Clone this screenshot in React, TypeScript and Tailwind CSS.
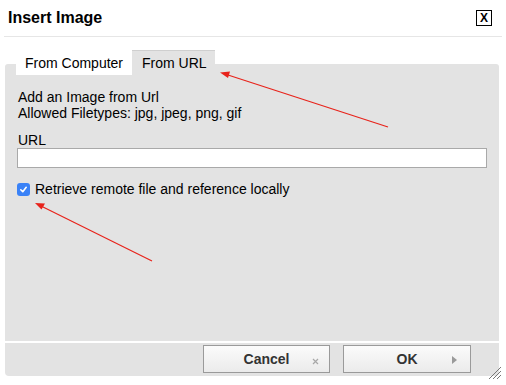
import React from "react";

export default function App() {
  return (
    <div
      className="relative w-[506px] h-[385px] bg-white overflow-hidden text-black"
      style={{ fontFamily: '"Liberation Sans", Arial, sans-serif' }}
    >
      {/* Header */}
      <div className="mx-[4px] h-[37px] flex items-center justify-between border-b border-[#e6e6e6] pl-[4px] pr-[10px]">
        <div className="text-[16px] font-bold leading-none">Insert Image</div>
        <div className="w-[16px] h-[16px] border border-black flex items-center justify-center text-[12px] font-bold leading-none">
          X
        </div>
      </div>

      {/* Tabs */}
      <div className="relative z-10 mt-[13px] ml-[16px] flex h-[24px] text-[14px] leading-none whitespace-nowrap">
        <div className="h-[25px] bg-white px-[9px] flex items-center pt-[1px]">From Computer</div>
        <div className="h-[24px] bg-[#e3e3e3] border-t border-[#cfcfcf] pl-[10px] pr-[8px] flex items-center">From URL</div>
      </div>

      {/* Panel */}
      <div className="-mt-[10px] ml-[5px] mr-[7px] h-[277px] bg-[#e3e3e3] rounded-t-[3px] pt-[25px] pl-[12px] pr-[12px] text-[14px]">
        <div className="pl-[1px] leading-[16px]">
          <div>Add an Image from Url</div>
          <div>Allowed Filetypes: jpg, jpeg, png, gif</div>
        </div>
        <div className="mt-[11px] pl-[1px] leading-[16px]">URL</div>
        <div className="h-[20px] w-[470px] border border-[#a9a9a9] bg-white" />
        <div className="mt-[13px] flex items-center leading-[16px]">
          <span className="w-[13px] h-[13px] rounded-[3px] bg-[#3a82f7] flex items-center justify-center">
            <svg width="9" height="9" viewBox="0 0 10 10">
              <path d="M2 5.3 L4.2 7.5 L8 2.6" stroke="white" strokeWidth="1.8" fill="none" strokeLinecap="round" strokeLinejoin="round" />
            </svg>
          </span>
          <span className="ml-[5px]">Retrieve remote file and reference locally</span>
        </div>
      </div>

      {/* Separator + footer */}
      <div className="ml-[5px] mr-[7px] h-[1px] bg-white mt-[1px]" />
      <div className="ml-[5px] mr-[7px] h-[33px] bg-[#e3e3e3] rounded-b-[4px] flex justify-end items-start pt-[2px] pr-[28px] gap-[13px]">
        <div className="relative w-[127px] h-[28px] border border-[#9a9a9a] bg-gradient-to-b from-[#fbfbfb] to-[#ebebeb] flex items-center justify-center text-[14px] font-bold text-[#333]">
          Cancel
          <svg className="absolute left-[108px] top-[12px]" width="7" height="7" viewBox="0 0 7 7">
            <path d="M1 1 L6 6 M6 1 L1 6" stroke="#a8a8a8" strokeWidth="1.2" />
          </svg>
        </div>
        <div className="relative w-[128px] h-[28px] border border-[#9a9a9a] bg-gradient-to-b from-[#fbfbfb] to-[#ebebeb] flex items-center justify-center text-[14px] font-bold text-[#333]">
          OK
          <svg className="absolute left-[108px] top-[10px]" width="5" height="8" viewBox="0 0 5 8">
            <path d="M0 0 L5 4 L0 8 Z" fill="#9a9a9a" />
          </svg>
        </div>
      </div>

      {/* Resize grip */}
      <svg className="absolute left-[486px] top-[364px]" width="16" height="16" viewBox="0 0 16 16">
        <path d="M15 3 L3 15 M15 7 L7 15 M15 11 L11 15" stroke="#777" strokeWidth="1" />
      </svg>

      {/* Red annotation arrows */}
      <svg className="absolute left-0 top-0 pointer-events-none" width="506" height="385" viewBox="0 0 506 385">
        <line x1="388" y1="127" x2="228" y2="75" stroke="#e8231b" strokeWidth="1.2" />
        <polygon points="220,72.5 230,71.5 228,78" fill="#e8231b" />
        <line x1="152" y1="261" x2="41" y2="206" stroke="#e8231b" strokeWidth="1.2" />
        <polygon points="35,203 45,203.5 41.5,209.5" fill="#e8231b" />
      </svg>
    </div>
  );
}
